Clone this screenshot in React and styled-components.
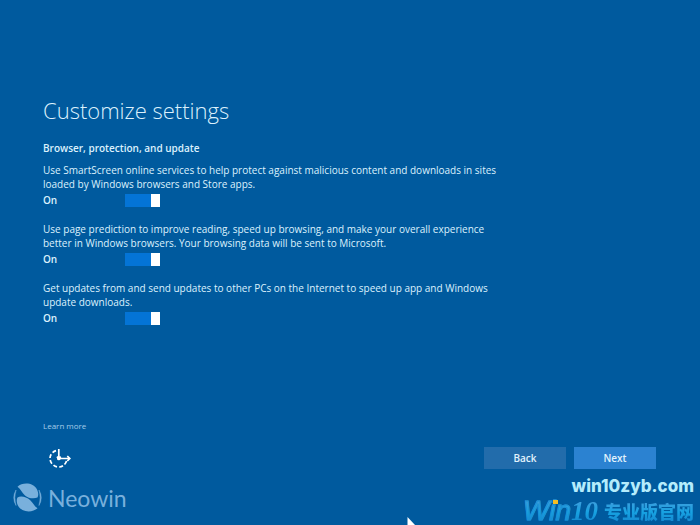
import React, { useState } from "react";
import styled, { createGlobalStyle } from "styled-components";

const GlobalStyle = createGlobalStyle`
  * { box-sizing: border-box; }
  body {
    margin: 0;
    background: #005a9e;
    color: #dcf1fd;
    font-family: "Open Sans", "Noto Sans", sans-serif;
    font-size: 10px;
    line-height: 14px;
  }
`;

const Page = styled.div`
  position: relative;
  min-height: 100vh;
  overflow: hidden;
  display: flex;
  flex-direction: column;
  justify-content: space-between;
  padding: 92px 44px 56px 43px;
`;

const Content = styled.main`
  max-width: 458px;
`;

const Title = styled.h1`
  margin: 0 0 13px;
  font-size: 22px;
  line-height: 36px;
  font-weight: 300;
`;

const Subtitle = styled.h2`
  margin: 0 0 8px;
  font-size: 10px;
  line-height: 14px;
  font-weight: 600;
`;

const SettingList = styled.div`
  display: grid;
  gap: 15px;
`;

const Setting = styled.section`
  display: grid;
  gap: 2px;
`;

const Description = styled.p`
  margin: 0;
`;

const ToggleRow = styled.label`
  display: flex;
  align-items: center;
  height: 14px;
  font-weight: 600;
`;

const ToggleState = styled.span`
  width: 82px;
`;

const Toggle = styled.input`
  appearance: none;
  margin: 0;
  width: 35px;
  height: 13px;
  display: flex;
  justify-content: flex-start;
  background: #3a6f9f;
  cursor: pointer;

  &::before {
    content: "";
    width: 9px;
    background: #ffffff;
  }
  &:checked {
    justify-content: flex-end;
    background: #0474d6;
  }
`;

const Footer = styled.footer`
  display: grid;
  gap: 15px;
`;

const LearnMore = styled.a`
  justify-self: start;
  color: #a5cbe8;
  font-size: 8px;
  line-height: 12px;
  text-decoration: none;
`;

const Actions = styled.div`
  display: flex;
  align-items: center;
  justify-content: space-between;
`;

const EaseButton = styled.button`
  display: flex;
  margin: 0 0 0 5px;
  padding: 0;
  border: 0;
  background: none;
  color: #ffffff;
`;

const ButtonGroup = styled.div`
  display: flex;
  gap: 8px;
`;

const Button = styled.button`
  width: 82px;
  height: 22px;
  padding: 0;
  border: 0;
  background: ${(p) => (p.$primary ? "#2b82d1" : "#226cab")};
  color: #e2f3fd;
  font: 600 10px/22px "Open Sans", "Noto Sans", sans-serif;
`;

const Brand = styled.div`
  position: absolute;
  left: 13px;
  bottom: 12px;
  display: flex;
  align-items: center;
  gap: 6px;
  color: #79b0dc;
  font-family: Lato, sans-serif;
  font-size: 23px;
  line-height: 30px;
`;

const Watermark = styled.div`
  position: absolute;
  right: 6px;
  bottom: 0;
  display: flex;
  flex-direction: column;
  align-items: flex-end;
`;

const SiteAddress = styled.div`
  color: #b4ecfc;
  font: 800 17px/22px Inter, sans-serif;
`;

const SiteName = styled.div`
  display: flex;
  align-items: center;
  gap: 6px;
  height: 28px;
`;

const Gradient = styled.span`
  background: linear-gradient(#4d9cdb, #16a2e2 55%, #1580ca);
  background-clip: text;
  color: transparent;
`;

const Latin = styled(Gradient)`
  position: relative;
  font: italic 400 28px/28px "Liberation Sans", sans-serif;
  -webkit-text-stroke: 1px #1990d5;
`;

const Digits = styled.span`
  font: italic 700 27px/28px "Liberation Serif", serif;
  -webkit-text-stroke: 0;
`;

const Chinese = styled(Gradient)`
  font: 900 18px/28px "Noto Sans CJK SC", sans-serif;
`;

const Dot = styled.span`
  position: absolute;
  left: 30px;
  top: 3px;
  width: 5px;
  height: 4px;
  background: #f5be24;
`;

const Pointer = styled.svg`
  position: absolute;
  left: 58%;
  bottom: 0;
`;

const settings = [
  "Use SmartScreen online services to help protect against malicious content and downloads in sites loaded by Windows browsers and Store apps.",
  "Use page prediction to improve reading, speed up browsing, and make your overall experience better in Windows browsers. Your browsing data will be sent to Microsoft.",
  "Get updates from and send updates to other PCs on the Internet to speed up app and Windows update downloads.",
];

function SettingItem({ text }) {
  const [on, setOn] = useState(true);
  return (
    <Setting>
      <Description>{text}</Description>
      <ToggleRow>
        <ToggleState>{on ? "On" : "Off"}</ToggleState>
        <Toggle type="checkbox" role="switch" checked={on} onChange={(e) => setOn(e.target.checked)} />
      </ToggleRow>
    </Setting>
  );
}

export default function App() {
  return (
    <>
      <GlobalStyle />
      <Page>
        <Content>
          <Title>Customize settings</Title>
          <Subtitle>Browser, protection, and update</Subtitle>
          <SettingList>
            {settings.map((text) => (
              <SettingItem key={text} text={text} />
            ))}
          </SettingList>
        </Content>
        <Footer>
          <LearnMore href="#">Learn more</LearnMore>
          <Actions>
            <EaseButton aria-label="Ease of access">
              <svg width="25" height="22" viewBox="0 0 25 22" fill="none" stroke="currentColor" strokeWidth="1.7">
                <path d="M8 3.6A8.3 8.3 0 0 0 4.600 5.600M3.200 7.300A8.300 8.300 0 0 0 2 11M2.200 13A8.300 8.300 0 0 0 3.900 16.700M5.500 18.200A8.300 8.300 0 0 0 9 19.900M11.200 20A8.300 8.300 0 0 0 15 18.800M16.500 17.500A8.300 8.300 0 0 0 18.500 14" />
                <path d="M10.800 2V11.500H21.500M8.900 9.600L10.800 11.500L12.700 9.600M19.300 9L21.800 11.500L19.300 14" />
                <circle cx="10.800" cy="11.500" r="1" fill="currentColor" />
              </svg>
            </EaseButton>
            <ButtonGroup>
              <Button type="button">Back</Button>
              <Button type="button" $primary>Next</Button>
            </ButtonGroup>
          </Actions>
        </Footer>
        <Brand>
          <svg width="29" height="30" viewBox="0 0 29 30" fill="#79b0dc" aria-hidden="true">
            <path d="M4.500 3.800C8 0.500 14.500 -0.500 19.500 2C24.500 4.500 26.500 11 24.500 14.500C21 16 15.500 15.500 12 12.500C8.800 9.700 8 6 4.500 3.800Z" />
            <path d="M24.500 25.200C21 28.500 14.500 29.500 9.500 27C4.500 24.500 2.500 18 4.500 14.500C8 12.500 13.500 14 17 17C20.200 19.800 21 23 24.500 25.200Z" />
            <path d="M3 7Q-1.500 14.500 3 22.500Q0.600 14.500 3 7ZM26 7Q30.500 14.500 26 22.500Q28.400 14.500 26 7Z" stroke="#79b0dc" strokeWidth="0.5" />
          </svg>
          <span>Neowin</span>
        </Brand>
        <Watermark>
          <SiteAddress>win10zyb.com</SiteAddress>
          <SiteName>
            <Latin>
              Win<Digits>10</Digits>
              <Dot />
            </Latin>
            <Chinese lang="zh">专业版官网</Chinese>
          </SiteName>
        </Watermark>
        <Pointer width="10" height="8" viewBox="0 0 10 8" aria-hidden="true">
          <path d="M1.500 0L9 8H1.500Z" fill="#ffffff" />
        </Pointer>
      </Page>
    </>
  );
}
